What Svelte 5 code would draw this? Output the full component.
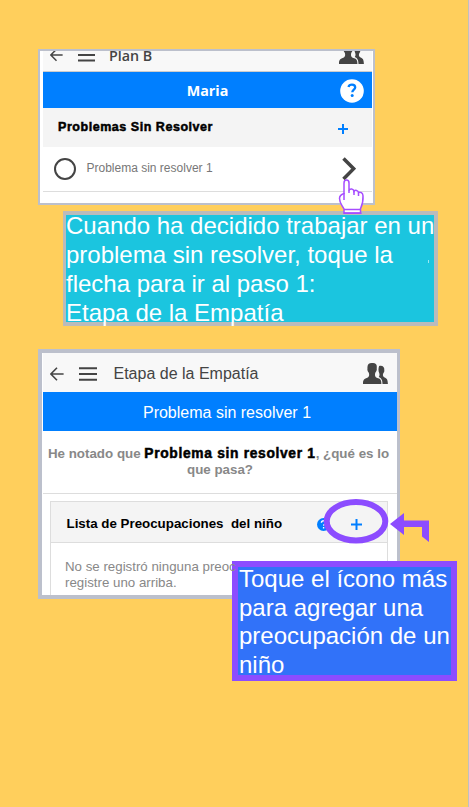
<script>
  const steps = ['Cuando ha decidido trabajar en un', 'problema sin resolver, toque la', 'flecha para ir al paso 1:', 'Etapa de la Empatía'];
  const hint = ['Toque el ícono más', 'para agregar una', 'preocupación de un', 'niño'];
</script>

{#snippet back()}
  <svg class="back" width="14" height="14" viewBox="0 0 14 14"><path d="M7 .8.9 7 7 13.2M1 7h12.6" fill="none" stroke="#444" stroke-width="1.6" /></svg>
{/snippet}
{#snippet menu()}
  <svg class="menu" width="18" height="14" viewBox="0 0 18 14"><path d="M0 1.2h18M0 7h18M0 12.8h18" stroke="#444" stroke-width="2" /></svg>
{/snippet}
{#snippet people()}
  <svg class="people" width="25" height="21" viewBox="0 0 25 21" fill="#444">
    <path d="M16.100 2.900c3.500-.8 5.500 1 5.200 4.300.3 1.200-.5 2.400-1.100 3.300-.5 1.500-.4 2.800 1 3.800 2.800 1.100 3.500 2.200 3.700 6.700h-5.400c-.1-4-1-5.700-3.700-6.900.7-1.300 1-2.300.4-4-1-2.300-.9-5 -.1-7.200Z" />
    <path d="M9.300.1c3.300-.3 5 1.400 4.400 5.100.5 2-.7 3.400-1.400 4.500-.6 2.400-.4 4.200 1.400 5 3.900 1.100 4.700 2.100 4.700 6.300H0c0-4 .6-5 4.300-6.300 1.900-.8 2.200-2.600 1.500-5C4.900 8.600 4 7.200 4.500 5.200 4 1.900 5.900-.2 9.300.1Z" />
  </svg>
{/snippet}

<main>
  <section class="card first">
    <header>
      {@render back()}{@render menu()}<span class="title">Plan B</span>{@render people()}
    </header>
    <div class="bar">
      <b>Maria</b>
      <svg width="24" height="24" viewBox="0 0 24 24"><circle cx="12" cy="12" r="11.8" fill="#fff" /><path d="M8.500 8c.4-1.500 1.700-2.300 3.500-2.300 2 0 3.200 1 3.200 2.700 0 2.200-2.900 2.300-2.900 4.800" fill="none" stroke="#007fff" stroke-width="2.300" /><circle cx="12.200" cy="16.500" r="1.500" fill="#007fff" /></svg>
    </div>
    <div class="heading">
      <b>Problemas Sin Resolver</b>
      <svg width="10" height="10" viewBox="0 0 10 10"><path d="M5 0v10M0 5h10" stroke="#007fff" stroke-width="2" /></svg>
    </div>
    <div class="row">
      <i></i><span>Problema sin resolver 1</span>
      <svg width="14" height="24" viewBox="0 0 14 24"><path d="m1.500 1.500 10.200 10.200L1.500 22" fill="none" stroke="#444" stroke-width="3.500" /></svg>
    </div>
    <svg class="hand" width="27" height="36" viewBox="0 0 27 36">
      <path d="M6 34v-4C4 26 1.500 24 1.500 19.500c0-2.600 1.500-4 4.500-5V4c0-4 5-4 5 0v7.500c1-2.300 4.500-1.800 5 .8 1.200-1.700 4-1 4.500 1.200 2-.8 4.300.3 4.500 3.200.4 5-.7 9-2.500 13V34Z" fill="#fff" stroke="#a64dff" stroke-width="1.500" />
      <path d="M6 14v7M11 11v3M16 12v4M20.500 14v3M6 30.500h17M5.500 34.300h18" stroke="#a64dff" stroke-width="1.500" />
    </svg>
  </section>

  <section class="note cyan">
    {#each steps as line}<p>{line}</p>{/each}
    <em></em>
  </section>

  <section class="card second">
    <header>
      {@render back()}{@render menu()}<span class="title">Etapa de la Empatía</span>{@render people()}
    </header>
    <div class="bar">Problema sin resolver 1</div>
    <div class="question">
      <p>He notado que <b>Problema sin resolver 1</b>, ¿qué es lo</p>
      <p>que pasa?</p>
    </div>
    <div class="panel">
      <div class="panel-head">
        <b>Lista de Preocupaciones&nbsp; del niño</b>
        <svg class="help" width="13" height="13" viewBox="0 0 13 13"><circle cx="6.500" cy="6.500" r="6.500" fill="#007fff" /><path d="M4.400 4.800c.2-2.700 4.300-2.600 4.300-.2 0 1.500-2 1.400-2 3.200M6.600 9v1.500" fill="none" stroke="#fff" stroke-width="1.400" /></svg>
        <svg class="plus" width="11" height="11" viewBox="0 0 11 11"><path d="M5.500 0v11M0 5.500h11" stroke="#007fff" stroke-width="2" /></svg>
      </div>
      <div class="empty"><p>No se registró ninguna preoc</p><p>registre uno arriba.</p></div>
    </div>
    <svg class="pointer" width="107" height="46" viewBox="0 0 107 46">
      <ellipse cx="33" cy="22.300" rx="29.300" ry="19.200" fill="none" stroke="#8c4cff" stroke-width="6" />
      <path d="M67 25 81 14v7.500h25V43l-7-5.500V28H81v8Z" fill="#8c4cff" />
    </svg>
  </section>

  <section class="note blue">
    {#each hint as line}<p>{line}</p>{/each}
  </section>
</main>

<style>
  main {
    box-sizing: border-box;
    width: 469px;
    height: 807px;
    padding-top: 49px;
    overflow: hidden;
    background: #ffcf5c;
    border-right: 1px solid #bfc0c0;
    font-family: "Liberation Sans", Arial, sans-serif;
    white-space: nowrap;
  }
  p { margin: 0; }
  svg { display: block; flex: none; }
  .card {
    box-sizing: border-box;
    position: relative;
    margin-left: 38px;
    background: #fff;
    border: 2px solid #bcc0cc;
  }
  .first { width: 337px; height: 156px; padding: 0 1px 0 3px; }
  .second { width: 362px; height: 250px; margin-top: 23px; border-width: 4px; padding: 0 0 0 1px; border-right-width: 3px; }
  header { display: flex; align-items: center; box-sizing: border-box; background: #f8f8f8; color: #444; }
  .first header { height: 21px; border-bottom: 1px solid #ccc; overflow: hidden; padding: 0 8px 0 7px; }
  .second header { height: 39px; padding: 2px 9px 0 7px; }
  .menu { margin-left: 15px; }
  .people { margin-left: auto; }
  .first .back, .first .menu { margin-top: -13px; }
  .first .back { width: 13px; }
  .first .menu { width: 17px; }
  .first .people { margin-top: -15px; }
  .first .title { margin: -12px 0 0 14px; font: 600 14.300px "Open Sans", sans-serif; }
  .second .title { margin: 1px 0 0 16.500px; font-size: 16px; }
  .bar { display: flex; align-items: center; justify-content: center; background: #007fff; color: #fff; }
  .first .bar { position: relative; height: 36px; font: 14.300px "Open Sans", sans-serif; }
  .first .bar svg { position: absolute; right: 8px; top: 7px; }
  .second .bar { box-sizing: border-box; height: 39px; font-size: 16px; padding: 2px 0 0 14px; }
  .heading { display: flex; align-items: center; height: 39px; box-sizing: border-box; padding: 0 24px 2px 15px; justify-content: space-between; background: #f4f4f4; font-size: 12.500px; }
  .heading b, .question b { -webkit-text-stroke: .5px #000; }
  .heading b { letter-spacing: .54px; }
  .heading svg { margin-top: 5px; }
  .row { display: flex; align-items: center; box-sizing: border-box; height: 45px; padding: 0 16px 0 11px; border-bottom: 1px solid #ddd; color: #777; font-size: 12px; }
  .row i { box-sizing: border-box; width: 22px; height: 22px; border: 2px solid #444; border-radius: 50%; margin-right: 10.500px; }
  .row span { margin-top: -2px; }
  .row svg { margin-left: auto; }
  .hand { position: absolute; left: 297.500px; top: 128px; z-index: 2; }
  .note { position: relative; box-sizing: border-box; color: #fff; font-size: 24px; line-height: 29px; }
  .cyan { width: 375px; height: 115px; margin: 6px 0 0 63px; border: 4px solid #bbb; border-left-width: 3px; background: #1bc5df; }
  .cyan p:first-child { margin-top: -4px; }
  .cyan em { position: absolute; left: 362px; top: 45px; width: 1px; height: 3px; background: #9be8f2; }
  .question { box-sizing: border-box; height: 63px; padding-top: 15px; border-bottom: 1px solid #ddd; text-align: center; color: #888; font-size: 13.350px; font-weight: bold; line-height: 16px; }
  .question p:first-child { margin-right: 3px; }
  .question b { color: #000; font-size: 13.800px; letter-spacing: .68px; }
  .panel { box-sizing: border-box; width: 338px; height: 94px; margin: 7px 0 0 7px; border: 1px solid #ddd; border-bottom: 0; }
  .panel-head { display: flex; align-items: center; height: 41px; padding: 4px 0 0 15.500px; background: #f4f4f4; border-bottom: 1px solid #ddd; box-sizing: border-box; font-size: 13.330px; }
  .panel-head b { margin-top: -2px; }
  .help { margin-left: 34.500px; }
  .plus { margin-left: 21.500px; }
  .empty { position: relative; z-index: 3; padding: 16px 0 0 14px; color: #888; font-size: 13.300px; line-height: 16px; }
  .pointer { position: absolute; left: 281px; top: 146px; z-index: 2; }
  .blue { width: 225px; height: 120px; margin: -38px 0 0 232px; border: 6px solid #8c4cff; background: #3172f9; line-height: 28.700px; }
  .blue p { margin-left: 1px; }
  .blue p:first-child { margin-top: -2px; }
</style>
